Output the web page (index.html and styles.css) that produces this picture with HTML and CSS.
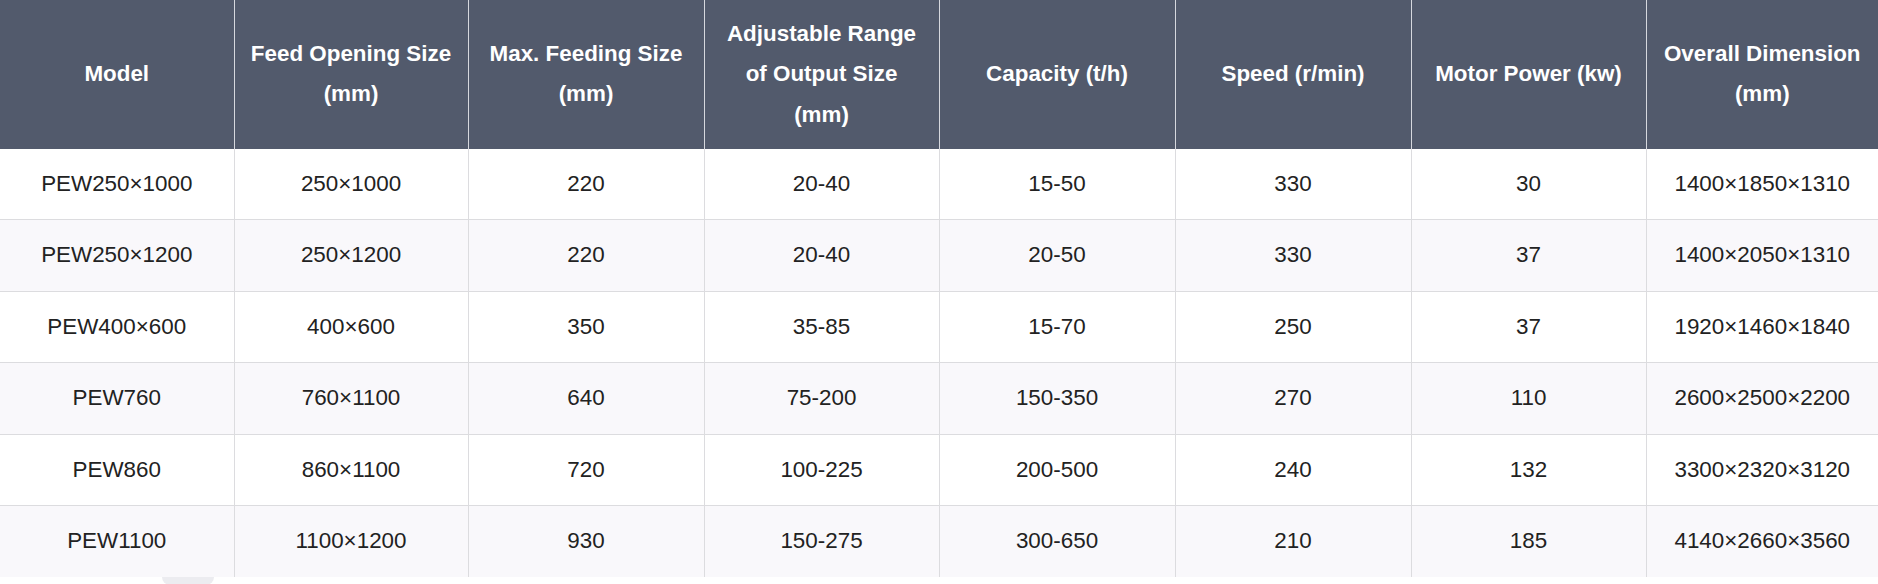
FILE: index.html
```html
<!DOCTYPE html>
<html lang="en">
<head>
<meta charset="utf-8">
<title>PEW Jaw Crusher Specifications</title>
<link rel="stylesheet" href="styles.css">
</head>
<body>
<div class="wrap">
<table class="spec">
  <colgroup>
    <col class="c1"><col class="c2"><col class="c3"><col class="c4"><col class="c5"><col class="c6"><col class="c7"><col class="c8">
  </colgroup>
  <thead>
    <tr>
      <th>Model</th>
      <th>Feed Opening Size (mm)</th>
      <th>Max. Feeding Size (mm)</th>
      <th>Adjustable Range of Output Size (mm)</th>
      <th>Capacity (t/h)</th>
      <th>Speed (r/min)</th>
      <th>Motor Power (kw)</th>
      <th>Overall Dimension (mm)</th>
    </tr>
  </thead>
  <tbody>
    <tr><td>PEW250×1000</td><td>250×1000</td><td>220</td><td>20-40</td><td>15-50</td><td>330</td><td>30</td><td>1400×1850×1310</td></tr>
    <tr><td>PEW250×1200</td><td>250×1200</td><td>220</td><td>20-40</td><td>20-50</td><td>330</td><td>37</td><td>1400×2050×1310</td></tr>
    <tr><td>PEW400×600</td><td>400×600</td><td>350</td><td>35-85</td><td>15-70</td><td>250</td><td>37</td><td>1920×1460×1840</td></tr>
    <tr><td>PEW760</td><td>760×1100</td><td>640</td><td>75-200</td><td>150-350</td><td>270</td><td>110</td><td>2600×2500×2200</td></tr>
    <tr><td>PEW860</td><td>860×1100</td><td>720</td><td>100-225</td><td>200-500</td><td>240</td><td>132</td><td>3300×2320×3120</td></tr>
    <tr><td>PEW1100</td><td>1100×1200</td><td>930</td><td>150-275</td><td>300-650</td><td>210</td><td>185</td><td>4140×2660×3560</td></tr>
  </tbody>
</table>
<div class="tab"></div>
</div>
</body>
</html>
```
FILE: styles.css
```css
html, body {
  margin: 0;
  padding: 0;
  background: #ffffff;
}
body {
  font-family: "Liberation Sans", Arial, sans-serif;
  color: #222222;
}
.wrap {
  width: 1878px;
  overflow: hidden;
}
.spec {
  width: 1878px;
  table-layout: fixed;
  border-collapse: collapse;
  font-size: 22.4px;
}
.spec .c1 { width: 234px; }
.spec .c2 { width: 234px; }
.spec .c3 { width: 236px; }
.spec .c4 { width: 235px; }
.spec .c5 { width: 236px; }
.spec .c6 { width: 236px; }
.spec .c7 { width: 235px; }
.spec .c8 { width: 232px; }
.spec th {
  background: #525a6c;
  color: #ffffff;
  font-weight: bold;
  line-height: 40.5px;
  padding: 13.5px 12px;
  text-align: center;
  vertical-align: middle;
  border-left: 1px solid #d6d8de;
}
.spec td {
  line-height: 40.5px;
  padding: 15px 8px;
  text-align: center;
  vertical-align: middle;
  border-left: 1px solid #dcdcdf;
  border-top: 1px solid #dcdcdf;
}
.spec th:first-child,
.spec td:first-child {
  border-left: none;
}
.spec tbody tr:first-child td {
  border-top: none;
}
.spec tbody tr:nth-child(even) td {
  background: #f9f8fb;
}
.tab {
  width: 52px;
  height: 8px;
  margin-left: 162px;
  background: #ececf0;
  border-radius: 0 0 10px 10px;
}
```
